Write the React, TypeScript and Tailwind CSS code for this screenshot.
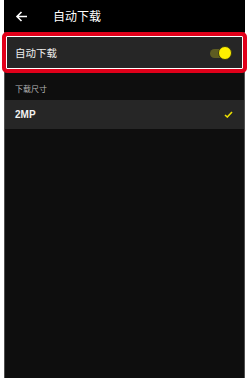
import React from "react";

export default function App() {
  return (
    <div
      className="relative w-[249px] h-[378px] bg-white overflow-hidden"
      style={{ fontFamily: '"Noto Sans CJK SC", "Liberation Sans", sans-serif' }}
    >
      <div className="ml-[4px] w-[241px] h-full flex flex-col">
        {/* Header */}
        <div className="h-[32px] bg-black flex items-center shrink-0">
          <svg width="13" height="11" viewBox="0 0 13 11" className="ml-[11px]">
            <path d="M12 5.5H2M6.5 1L2 5.5L6.5 10" stroke="#fff" strokeWidth="1.6" fill="none" />
          </svg>
          <span className="ml-[25px] text-[12px] leading-none text-white">自动下载</span>
        </div>
        {/* Body */}
        <div className="flex-1 flex flex-col bg-[#0e0e0e] border-x border-[#505050]">
          <div className="h-[41px] bg-[#262626] flex items-center justify-between shrink-0">
            <span className="ml-[10px] mt-[1px] text-[10.5px] leading-none text-[#eeeeee]">自动下载</span>
            <div className="relative w-[24px] h-[14px] mr-[10px] mt-[1px] flex items-center">
              <div className="w-[20px] h-[9px] rounded-full bg-[#5e5c22]" />
              <div className="absolute left-[8px] top-[0px] w-[14px] h-[14px] rounded-full bg-[#fff000] border border-[#3a3a10]" />
            </div>
          </div>
          <div className="h-[27px] flex items-center shrink-0">
            <span className="ml-[10px] mt-[4px] text-[8px] leading-none text-[#b4b4b4]">下载尺寸</span>
          </div>
          <div className="h-[29px] bg-[#262626] flex items-center justify-between shrink-0">
            <span
              className="ml-[10px] text-[10px] font-bold leading-none text-[#f2f2f2]"
              style={{ fontFamily: '"Liberation Sans", sans-serif' }}
            >
              2MP
            </span>
            <svg width="9" height="7" viewBox="0 0 9 7" className="mr-[11px]">
              <path d="M1 4L3.3 6L8 1" stroke="#ece000" strokeWidth="1.6" fill="none" />
            </svg>
          </div>
        </div>
      </div>
      {/* Highlight overlay */}
      <div className="absolute left-[2px] top-[32px] w-[245px] h-[41px] border-[4px] border-[#e1001a] rounded-[5px] shadow-[inset_0_0_0_1px_#ffffff] pointer-events-none" />
    </div>
  );
}
